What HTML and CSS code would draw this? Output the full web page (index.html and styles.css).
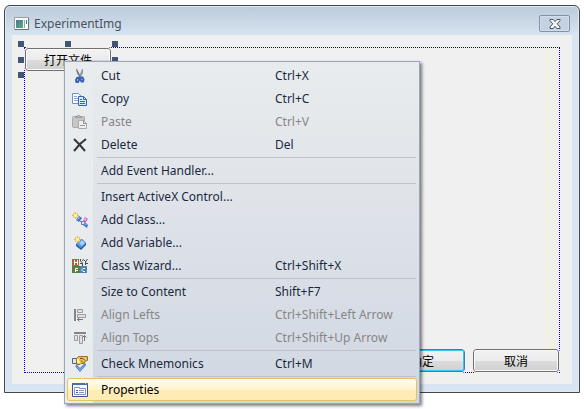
FILE: index.html
```html
<!DOCTYPE html>
<html lang="en">
<head>
<meta charset="utf-8">
<title>ExperimentImg</title>
<link rel="stylesheet" href="styles.css">
</head>
<body>
<main class="window">
  <header class="titlebar">
    <svg class="app-icon" viewBox="0 0 16 14" aria-hidden="true">
      <defs><linearGradient id="app" x2="1" y2="1"><stop stop-color="#4b75a7"/><stop offset="1" stop-color="#55b06b"/></linearGradient></defs>
      <path fill="#fafcfc" stroke="#999f9f" d="M.5.5h14v12H.5z"/>
      <path fill="#6b7272" d="M14 1h1v12H1v-1h13z"/>
      <path fill="url(#app)" d="M2 3h7v8H2z"/>
      <path fill="#8fa9b4" d="M10 3h1v8h-1z"/>
      <path fill="#378b65" d="M12 3h1v4h-1z"/>
    </svg>
    <h1 class="title">ExperimentImg</h1>
    <button class="close" type="button" aria-label="Close">
      <svg viewBox="0 0 12 10" aria-hidden="true"><path fill="#f5f7fa" stroke="#4b5567" d="M1 .5h3.200L6 2.600 7.800.5H11v1.200L8.200 4.800 11 8v1.500H7.800L6 7.200 4.200 9.500H1V8l2.800-3.200L1 1.700z"/></svg>
    </button>
  </header>
  <div class="client">
    <div class="guide">
      <div class="selection">
        <button class="btn" type="button">打开文件</button>
        <i class="handle top left"></i><i class="handle top center"></i><i class="handle top right"></i>
        <i class="handle middle left"></i><i class="handle middle right"></i>
        <i class="handle bottom left"></i><i class="handle bottom center"></i><i class="handle bottom right"></i>
      </div>
      <div class="actions">
        <button class="btn default" type="button">确定</button>
        <button class="btn" type="button">取消</button>
      </div>
    </div>
  </div>
</main>

<div class="menu" role="menu">
  <button class="item" type="button" role="menuitem">
    <svg class="icon" viewBox="0 0 16 16" aria-hidden="true"><path fill="#69717d" d="M4 1l1 0 4 8-1 1-3-5z"/><path fill="#8d96a3" d="M11 1h-1L7 9l1 1 3-5z"/><path fill="none" stroke="#3465b5" stroke-width="2" d="M7 9.500l-2 .5-1 2 .5 2H6l1-2zM8.500 9.500l2 0 1 2-.5 2H9.500l-1-2z"/></svg>
    <span>Cut</span><kbd>Ctrl+X</kbd>
  </button>
  <button class="item" type="button" role="menuitem">
    <svg class="icon" viewBox="0 0 16 16" aria-hidden="true"><path fill="#f4f8ff" stroke="#7391cf" d="M.5 2.500h6l3 3v7h-9z"/><path stroke="#8da9dd" d="M2 5.500h3M2 7.500h4M2 9.500h4"/><path fill="#dceaff" stroke="#3563b7" d="M6.500 5.500h5l3 3v6h-8z"/><path fill="none" stroke="#3563b7" d="M11.500 5.500v3h3M8 8.500h2M8 10.500h5M8 12.500h5"/></svg>
    <span>Copy</span><kbd>Ctrl+C</kbd>
  </button>
  <button class="item" type="button" role="menuitem" disabled>
    <svg class="icon" viewBox="0 0 16 16" aria-hidden="true"><rect x=".5" y="2.500" width="12" height="11" rx="1" fill="#c6c6c6" stroke="#aaa"/><path fill="#e2e2e2" stroke="#999" d="M3.500 3.500v-1h2v-1h2v1h2v1z"/><path fill="#eee" stroke="#aaa" d="M6.500 6.500h5l3 3v5h-8z"/><path fill="#999" d="M11 6v4h4v-1h-3V6zM8 11h5v1H8z"/></svg>
    <span>Paste</span><kbd>Ctrl+V</kbd>
  </button>
  <button class="item" type="button" role="menuitem">
    <svg class="icon" viewBox="0 0 16 16" aria-hidden="true"><path fill="none" stroke="#353639" stroke-width="2" d="M2 2l5 5 6 7M14 2L8 7l-6 7"/></svg>
    <span>Delete</span><kbd>Del</kbd>
  </button>
  <hr>
  <button class="item" type="button" role="menuitem"><i class="icon"></i><span>Add Event Handler...</span></button>
  <hr>
  <button class="item" type="button" role="menuitem"><i class="icon"></i><span>Insert ActiveX Control...</span></button>
  <button class="item" type="button" role="menuitem">
    <svg class="icon" viewBox="0 0 16 16" aria-hidden="true"><path stroke="#777b89" fill="none" d="M8 9.500h4M9.500 9v3.500H12"/><path fill="#3770ca" d="M7 4l3 2-3 4-3-2z"/><path fill="#84b4f2" d="M7 5l1 1-2 2-1-1z"/><path fill="#f0b92a" d="M3 0h1v2l2-1v1L5 3l2 0v1H5l1 2H5L4 5v2H3V5L1 6V5l1-1H0V3h2L1 2V1l2 1z"/><path fill="#fffbd0" d="M3 2h1l1 1v1L4 5H3L2 4V3z"/><path fill="#c458c4" d="M13 5l3 2-3 4-2-2z"/><path fill="#f3aff0" d="M13 6l2 1-2 2-1-1z"/><path fill="#4174c6" d="M12 11l1-1 3 3-1 3-4-3z"/><path fill="#9dc4fa" d="M13 11l2 2h-1l-2-1z"/></svg>
    <span>Add Class...</span>
  </button>
  <button class="item" type="button" role="menuitem">
    <svg class="icon" viewBox="0 0 16 16" aria-hidden="true"><path fill="#235aa9" d="M10 4l4 4v2l-5 5-5-4V9z"/><path fill="#5b99e2" d="M10 4l4 4-5 5-5-4z"/><path fill="#a5cdf8" d="M10 5l3 3-3 3-3-3z"/><path fill="#f0b92a" d="M5 1h1v2l2-1v1L7 4h2v1H7l1 2H7L6 6v2H5V6L3 7V6l1-1H2V4h2L3 3V2l2 1z"/><path fill="#fffbd0" d="M5 3h1l1 1v1L6 6H5L4 5V4z"/></svg>
    <span>Add Variable...</span>
  </button>
  <button class="item" type="button" role="menuitem">
    <svg class="icon" viewBox="0 0 16 16" aria-hidden="true"><path fill="#c5533d" d="M0 1h7v7H0z"/><path fill="#4d853e" d="M0 8h8v7H0z"/><path fill="#4d84b8" d="M8 8h7v7H8z"/><path fill="none" stroke="#fff" d="M2.500 2v5M5.500 2v5M3 4.500h3M3.500 14v-3.500H6M4 12.500h2M13 10.500h-2l-1 1v1l1 1h2"/><path fill="none" stroke="#4b4c4f" d="M8.500 1v2l2 2v3M11.500 1l-1 2M15.500 1l-2 3v3M12 2l2 2M8 5.500h2M14 5.500h2"/></svg>
    <span>Class Wizard...</span><kbd>Ctrl+Shift+X</kbd>
  </button>
  <hr>
  <button class="item" type="button" role="menuitem"><i class="icon"></i><span>Size to Content</span><kbd>Shift+F7</kbd></button>
  <button class="item" type="button" role="menuitem" disabled>
    <svg class="icon" viewBox="0 0 16 16" aria-hidden="true"><path fill="#858585" d="M2 2h2v12H2z"/><path fill="#e0e1e4" stroke="#9b9c9f" d="M5.500 2.500h5v3h-5zM5.500 7.500h8v3h-8z"/><path fill="none" stroke="#777" d="M5 12.500h6M7.500 10.500l-2 2 2 2"/></svg>
    <span>Align Lefts</span><kbd>Ctrl+Shift+Left Arrow</kbd>
  </button>
  <button class="item" type="button" role="menuitem" disabled>
    <svg class="icon" viewBox="0 0 16 16" aria-hidden="true"><path fill="#858585" d="M2 2h12v2H2z"/><path fill="#e0e1e4" stroke="#9b9c9f" d="M2.500 5.500h3v5h-3zM7.500 5.500h3v8h-3z"/><path fill="none" stroke="#777" d="M12.500 5v6M10.500 7.500l2-2 2 2"/></svg>
    <span>Align Tops</span><kbd>Ctrl+Shift+Up Arrow</kbd>
  </button>
  <hr>
  <button class="item" type="button" role="menuitem">
    <svg class="icon" viewBox="0 0 16 16" aria-hidden="true"><path fill="#346cc1" d="M3 10l2-1 3 3 5-5 1 2-6 7z"/><path fill="#8bb6ee" d="M4 10h1l3 3 5-5v1l-5 6z"/><path fill="#dce6ee" stroke="#556171" d="M.5 2.500h4v5h-4z"/><path fill="#efc050" stroke="#95702b" d="M4.500 2.500l2-2h9v4l-3 1v2H9L8 8.500H4.500z"/><path fill="none" stroke="#62502f" d="M8 2.500h3l2 2M9 4.500l2 2"/><path fill="#fff0a4" d="M5 3h2v2h1v2H5z"/></svg>
    <span>Check Mnemonics</span><kbd>Ctrl+M</kbd>
  </button>
  <hr>
  <button class="item active" type="button" role="menuitem">
    <svg class="icon" viewBox="0 0 16 16" aria-hidden="true"><path fill="#f6faff" stroke="#35558d" d="M.5 1.500h15v13H.5z"/><path fill="#476eaf" d="M0 1h16v2H0z"/><path fill="#f2d27a" d="M13 1h1v1h-1z"/><path fill="#fff" stroke="#7c97c4" d="M2.500 6.500v-1h5v1h6v6h-11z"/><path fill="#315caa" d="M4 8h2v1H4zM4 10h2v1H4z"/><path fill="#8197ba" d="M7 8h5v1H7zM7 10h5v1H7z"/></svg>
    <span>Properties</span>
  </button>
</div>
</body>
</html>
```
FILE: styles.css
```css
* {
  box-sizing: border-box;
}

body {
  margin: 0;
  height: 100vh;
  padding: 5px 4px 16px;
  background: #fff;
  color: #1b293e;
  font: 12px/16px "Noto Sans", "Noto Sans CJK SC", sans-serif;
}

button {
  margin: 0;
  font: inherit;
  color: inherit;
}

.window {
  display: flex;
  flex-direction: column;
  height: 100%;
  padding: 0 7px 8px;
  border: 1px solid #424549;
  border-radius: 6px 6px 0 0;
  background: linear-gradient(#bccad9, #d7e4f2 30px);
  box-shadow: inset 0 0 0 1px #e2ebf4;
}

.titlebar {
  display: flex;
  align-items: center;
  gap: 4px;
  height: 29px;
  padding: 6px 2px 0;
}

.app-icon {
  width: 16px;
  height: 14px;
}

.title {
  flex: 1;
  margin: 0;
  color: #485361;
  font-size: 12px;
  font-weight: 400;
}

.close {
  display: flex;
  align-items: center;
  justify-content: center;
  width: 31px;
  height: 17px;
  padding: 0;
  border: 1px solid #8290ad;
  border-radius: 2px;
  background: #c4d2e1;
  box-shadow: inset 0 0 0 1px #d3deeb;
}

.close svg {
  width: 12px;
  height: 10px;
}

.client {
  display: flex;
  flex: 1;
  padding: 12px 12px 11px;
  background: #f0f0f0;
}

.guide {
  display: flex;
  flex: 1;
  flex-direction: column;
  justify-content: space-between;
  border: 1px dotted #0000c8;
}

.selection {
  position: relative;
  align-self: flex-start;
  display: flex;
}

.btn {
  width: 86px;
  height: 23px;
  padding: 0;
  border: 1px solid #707070;
  border-radius: 3px;
  outline: 1px solid #f0f0f0;
  background: linear-gradient(#f2f2f2, #ebebeb 50%, #ddd 50%, #cfcfcf);
  box-shadow: inset 0 0 0 1px #fafafa;
  color: #000;
  font-family: "Noto Sans CJK SC", sans-serif;
  line-height: 16px;
}

.btn.default {
  border-color: #3c7fb1;
  box-shadow: inset 0 0 0 1px #35c7ef;
}

.actions {
  display: flex;
  align-self: flex-end;
  gap: 8px;
}

.handle {
  position: absolute;
  width: 6px;
  height: 6px;
  background: #425674;
}

.top { top: -7px; }
.middle { top: 9px; }
.bottom { bottom: -7px; }
.left { left: -7px; }
.center { left: 40px; }
.right { right: -7px; }

.menu {
  position: absolute;
  top: 61px;
  left: 64px;
  width: 356px;
  padding: 2px;
  border: 1px solid #9ba7b7;
  background:
    linear-gradient(#e9ecee, #e9ecee) 0 0 / 28px 100% no-repeat,
    linear-gradient(#e9ecee, #d0d7e2);
  box-shadow: 2px 2px 3px rgb(0 0 0 / 50%);
}

.item {
  display: grid;
  grid-template-columns: 29px 174px 1fr;
  align-items: center;
  width: 100%;
  height: 23px;
  padding: 0 4px;
  border: 1px solid transparent;
  border-radius: 3px;
  background: none;
  text-align: left;
  white-space: nowrap;
}

.item:disabled {
  color: #868686;
}

.item.active {
  border-color: #e5c365;
  background: linear-gradient(#fffcf2, #fff3cf 50%, #ffecb5 50%);
  color: #000;
}

.item kbd {
  font: inherit;
}

.icon {
  width: 16px;
  height: 16px;
}

.menu hr {
  height: 1px;
  margin: 1px 1px 1px 30px;
  border: 0;
  background: #bec3cb;
}
```
